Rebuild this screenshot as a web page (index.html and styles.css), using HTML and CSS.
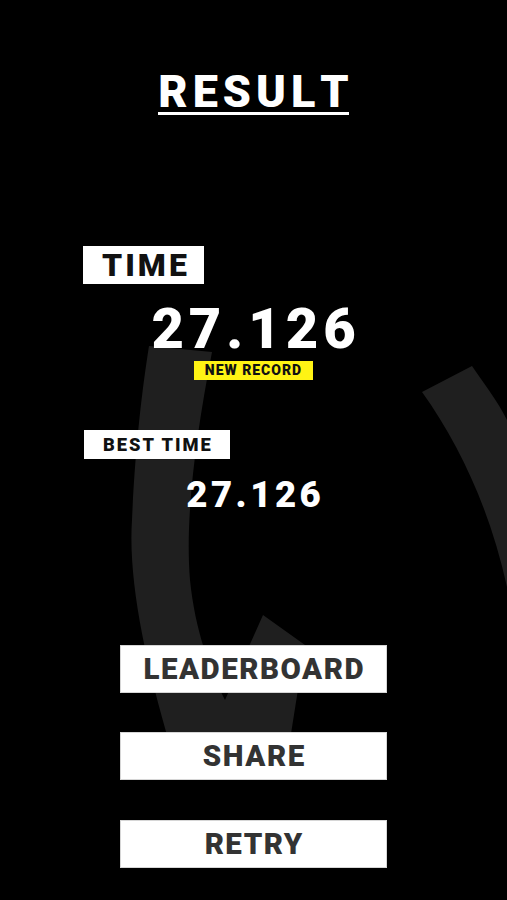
FILE: index.html
```html
<!DOCTYPE html>
<html lang="en">
<head>
  <meta charset="UTF-8">
  <meta name="viewport" content="width=device-width, initial-scale=1.0">
  <title>Result</title>
  <link rel="stylesheet" href="styles.css">
</head>

<body>
<div class="mainscreen">
    <!-- decorative background stroke -->
    <svg class="backdrop" width="507" height="900" viewBox="0 0 507 900">
        <path d="M149,346 L212,352 C195,440 185,520 190,580 C195,630 210,670 225,700 L263,615 L305,645 L290,740 L170,745 C145,660 128,580 132,520 C135,450 142,390 149,346 Z" fill="#1f1f1f"/>
        <path d="M422,392 L472,366 C485,385 497,400 507,420 L507,587 C490,510 460,445 422,392 Z" fill="#1f1f1f"/>
    </svg>

    <div class="content">
        <h1 class="title"><span>RESUL<b>T</b></span></h1>

        <div class="label time-label">TIME</div>
        <div class="time">27.126</div>
        <div class="record">NEW RECORD</div>

        <div class="label best-label">BEST TIME</div>
        <div class="best">27.126</div>

        <div class="buttons">
            <button type="button" class="button">LEADERBOARD</button>
            <button type="button" class="button">SHARE</button>
            <button type="button" class="button">RETRY</button>
        </div>
    </div>
</div>
</body>
</html>
```

FILE: styles.css
```css
body {
    font-family: 'Roboto', 'Liberation Sans', sans-serif;
    margin: 0;
    padding: 0;
    background: #000;
}

.mainscreen {
    position: relative;
    width: 507px;
    height: 900px;
    overflow: hidden;
    background: #000;
    color: #fff;
}

.backdrop {
    position: absolute;
    left: 0;
    top: 0;
}

.content {
    position: relative;
    display: flex;
    flex-direction: column;
    align-items: center;
}

.title {
    display: flex;
    justify-content: center;
    margin: 72px 0 0;
    font-size: 45px;
    font-weight: 900;
}

.title span {
    display: inline-block;
    line-height: 40px;
    letter-spacing: 5px;
    border-bottom: 3px solid #fff;
}

.title b {
    letter-spacing: 0;
    font-weight: 900;
}

.label {
    align-self: flex-start;
    background: #fff;
    color: #111;
    font-weight: 900;
}

.time-label {
    margin: 131px 0 0 83px;
    height: 38px;
    line-height: 38px;
    padding: 0 14px 0 19px;
    font-size: 32px;
    letter-spacing: 3px;
}

.time {
    margin-top: 17px;
    font-size: 56px;
    line-height: 1;
    font-weight: 900;
    letter-spacing: 5px;
    margin-right: -5px;
}

.record {
    margin-top: 4px;
    height: 19px;
    line-height: 19px;
    padding: 0 11px;
    background: #fff314;
    color: #111;
    font-size: 14px;
    font-weight: 900;
    letter-spacing: 1px;
}

.best-label {
    margin: 50px 0 0 84px;
    height: 29px;
    line-height: 29px;
    padding: 0 17px 0 19px;
    font-size: 18.3px;
    letter-spacing: 2px;
}

.best {
    margin-top: 18px;
    font-size: 36.6px;
    line-height: 1;
    font-weight: 900;
    letter-spacing: 3.5px;
    margin-right: -3.5px;
}

.buttons {
    display: flex;
    flex-direction: column;
    gap: 39.5px;
    margin-top: 131px;
}

.button {
    box-sizing: border-box;
    width: 267px;
    height: 48px;
    padding: 0;
    background: #fff;
    border: 1px solid #d6d6d6;
    border-radius: 0;
    color: #333;
    font-family: 'Roboto', 'Liberation Sans', sans-serif;
    font-size: 29.5px;
    font-weight: 900;
    letter-spacing: 1.5px;
    line-height: 46px;
    text-indent: 1.5px;
}
```
